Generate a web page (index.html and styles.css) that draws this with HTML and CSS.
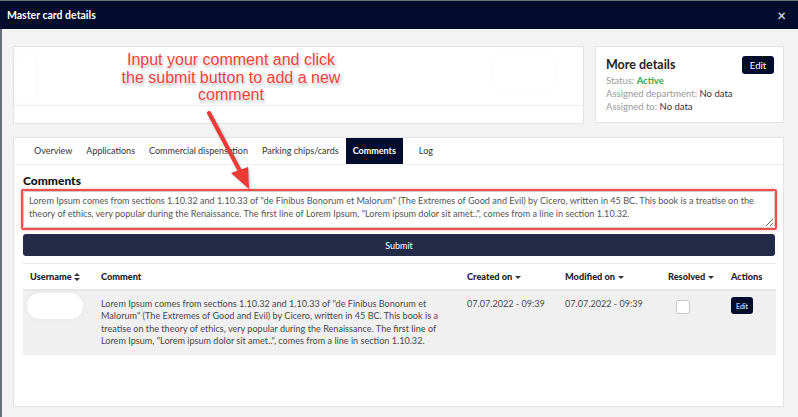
FILE: index.html
```html
<!DOCTYPE html>
<html lang="en">
<head>
    <meta charset="UTF-8">
    <title>Master card details</title>
    <link rel="stylesheet" href="styles.css">
</head>
<body>
    <div class="modal">
        <div class="modal-header">
            <span class="modal-title">Master card details</span>
            <span class="close">&times;</span>
        </div>
        <div class="modal-body">
            <div class="top-row">
                <div class="card info-card">
                    <div class="info-main">
                        <div class="blur blur-a"></div>
                        <div class="blur blur-b"></div>
                    </div>
                    <div class="info-foot"></div>
                </div>
                <div class="card details-card">
                    <div class="details-head">
                        <h3>More details</h3>
                        <button class="btn">Edit</button>
                    </div>
                    <div class="details-line"><span class="lbl">Status:</span> <span class="active">Active</span></div>
                    <div class="details-line"><span class="lbl">Assigned department:</span> No data</div>
                    <div class="details-line"><span class="lbl">Assigned to:</span> No data</div>
                </div>
            </div>

            <div class="card main-card">
                <div class="tabs">
                    <div class="tab">Overview</div>
                    <div class="tab">Applications</div>
                    <div class="tab">Commercial dispensation</div>
                    <div class="tab">Parking chips/cards</div>
                    <div class="tab selected">Comments</div>
                    <div class="tab tab-log">Log</div>
                </div>
                <div class="comments">
                    <h4>Comments</h4>
                    <div class="highlight">
                        <textarea class="comment-input">Lorem Ipsum comes from sections 1.10.32 and 1.10.33 of "de Finibus Bonorum et Malorum" (The Extremes of Good and Evil) by Cicero, written in 45 BC. This book is a treatise on the theory of ethics, very popular during the Renaissance. The first line of Lorem Ipsum, "Lorem ipsum dolor sit amet..", comes from a line in section 1.10.32.</textarea>
                    </div>
                    <button class="btn submit">Submit</button>

                    <table class="comment-table">
                        <colgroup>
                            <col class="c-user">
                            <col class="c-comment">
                            <col class="c-created">
                            <col class="c-modified">
                            <col class="c-resolved">
                            <col class="c-actions">
                        </colgroup>
                        <thead>
                            <tr>
                                <th>Username <svg class="sort" width="6" height="8" viewBox="0 0 6 8"><path d="M3 0L6 3H0zM3 8L0 5h6z" fill="#333"/></svg></th>
                                <th>Comment</th>
                                <th>Created on <span class="caret"></span></th>
                                <th>Modified on <span class="caret"></span></th>
                                <th>Resolved <span class="caret"></span></th>
                                <th>Actions</th>
                            </tr>
                        </thead>
                        <tbody>
                            <tr>
                                <td><div class="blur user-blur"></div></td>
                                <td class="comment-text">Lorem Ipsum comes from sections 1.10.32 and 1.10.33 of "de Finibus Bonorum et Malorum" (The Extremes of Good and Evil) by Cicero, written in 45 BC. This book is a treatise on the theory of ethics, very popular during the Renaissance. The first line of Lorem Ipsum, "Lorem ipsum dolor sit amet..", comes from a line in section 1.10.32.</td>
                                <td>07.07.2022 - 09:39</td>
                                <td>07.07.2022 - 09:39</td>
                                <td><span class="check"></span></td>
                                <td><button class="btn btn-sm">Edit</button></td>
                            </tr>
                        </tbody>
                    </table>
                </div>
            </div>
        </div>

        <!-- annotation over the screenshot -->
        <div class="note">Input your comment and click<br>the submit button to add a new<br>comment</div>
        <svg class="arrow" width="70" height="90" viewBox="0 0 70 90">
            <line x1="6" y1="4" x2="38" y2="64" stroke="#ee3a36" stroke-width="4" stroke-linecap="round"/>
            <path d="M28 64L45 58L46 80z" fill="#ee3a36"/>
        </svg>
    </div>
</body>
</html>
```

FILE: styles.css
```css
body {
    margin: 0;
    background-color: #6b6f78;
    font-family: Lato, "Open Sans", sans-serif;
    font-size: 9px;
    color: #333;
}
.modal {
    position: relative;
    margin-top: 1px;
    height: 416px;
    display: flex;
    flex-direction: column;
}
.modal-header {
    height: 28px;
    background-color: #020c2d;
    display: flex;
    align-items: center;
    justify-content: space-between;
    padding: 0 12px 0 7px;
    color: white;
}
.modal-title {
    font-weight: bold;
    font-size: 10.5px;
}
.close {
    font-size: 15px;
    font-weight: bold;
    color: #c8cad2;
}
.modal-body {
    flex: 1;
    background-color: #f3f3f3;
    margin-left: 2px;
    padding: 17px 14px 0 11px;
}
.card {
    background-color: white;
    border: 1px solid #e3e3e3;
    box-sizing: border-box;
}
.top-row {
    display: flex;
    gap: 11px;
}
.info-card {
    flex: 1;
    height: 78px;
    display: flex;
    flex-direction: column;
}
.info-main {
    flex: 1;
    position: relative;
    border-bottom: 1px solid #ececec;
}
.info-foot {
    height: 17px;
}
.blur {
    background-color: white;
    border-radius: 14px;
    box-shadow: 0 0 6px rgba(0, 0, 0, 0.04);
}
.details-card {
    width: 189px;
    height: 77px;
    padding: 9px 9px 0 10px;
}
.details-head {
    display: flex;
    justify-content: space-between;
    align-items: flex-start;
}
.details-head h3 {
    margin: 1px 0 0 0;
    font-size: 12.5px;
    font-weight: bold;
    color: #222;
}
.btn {
    background-color: #020c2d;
    color: white;
    border: none;
    border-radius: 3px;
    font-family: inherit;
    font-size: 9.5px;
    padding: 0;
    width: 32px;
    height: 18px;
    cursor: pointer;
}
.details-line {
    font-size: 9.5px;
    line-height: 13px;
    color: #333;
}
.lbl {
    color: #9a9a9a;
}
.active {
    color: #31a84a;
    font-weight: bold;
}
.main-card {
    margin-top: 13px;
    height: 270px;
}
.tabs {
    display: flex;
    height: 26px;
    padding-left: 13px;
    border-bottom: 1px solid #efefef;
}
.tab {
    padding: 0 7px;
    line-height: 26px;
    font-size: 9px;
    color: #333;
}
.tab.selected {
    background-color: #020c2d;
    color: white;
    font-weight: bold;
    padding: 0 7px;
}
.tab-log {
    padding-left: 16px;
}
.comments {
    padding: 0 8px 0 9px;
}
.comments h4 {
    margin: 8px 0 1px 0;
    font-size: 12px;
    font-weight: 900;
    color: #111;
}
.highlight {
    border: 2px solid #f0504b;
    border-radius: 2px;
    margin: 0 -2px;
    box-shadow: 0 0 3px rgba(200, 60, 60, 0.4);
}
.comment-input {
    display: block;
    width: 100%;
    height: 37px;
    box-sizing: border-box;
    resize: vertical;
    border: 1px solid #cfcfcf;
    border-radius: 2px;
    padding: 3px 5px;
    font-family: inherit;
    font-size: 9.1px;
    line-height: 12.5px;
    color: #555;
    overflow: hidden;
}
.submit {
    display: block;
    width: 100%;
    height: 22px;
    margin-top: 4px;
    background-color: #232b46;
    border-radius: 3px;
    font-size: 9px;
}
.comment-table {
    width: 100%;
    margin-top: 7px;
    border-collapse: collapse;
    table-layout: fixed;
    border-top: 1px solid #e6e6e6;
}
.c-user { width: 71px; }
.c-comment { width: 366px; }
.c-created { width: 98px; }
.c-modified { width: 103px; }
.c-resolved { width: 63px; }
.c-actions { width: 52px; }
.comment-table th {
    text-align: left;
    font-size: 9.2px;
    font-weight: 900;
    color: #222;
    height: 25px;
    padding: 0 0 0 7px;
    border-bottom: 2px solid #e4e6ea;
    white-space: nowrap;
}
.sort {
    vertical-align: -1px;
}
.caret {
    display: inline-block;
    width: 0;
    height: 0;
    border-left: 3px solid transparent;
    border-right: 3px solid transparent;
    border-top: 3.5px solid #333;
    vertical-align: 1px;
    margin-left: 1px;
}
.comment-table tbody tr {
    background-color: #f0f0f0;
}
.comment-table td {
    vertical-align: top;
    padding: 7px 0 7px 7px;
    font-size: 9.1px;
    line-height: 12.4px;
    color: #4a4a4a;
}
.comment-text {
    padding-right: 17px !important;
}
.user-blur {
    width: 56px;
    height: 26px;
    margin: -5px 0 0 -3px;
}
.check {
    display: inline-block;
    width: 12px;
    height: 12px;
    background-color: white;
    border: 1px solid #c9c9c9;
    border-radius: 2px;
    margin: 2px 0 0 8px;
}
.btn-sm {
    width: 22px;
    height: 17px;
    font-size: 7px;
    margin: -1px 0 0 0;
}
.blur-a {
    position: absolute;
    left: 2px;
    top: 6px;
    width: 20px;
    height: 50px;
}
.blur-b {
    position: absolute;
    left: 480px;
    top: 5px;
    width: 60px;
    height: 40px;
}
.note {
    position: absolute;
    left: 98px;
    top: 50px;
    width: 266px;
    text-align: center;
    font-family: "Liberation Sans", Arial, sans-serif;
    font-size: 16px;
    line-height: 17.5px;
    color: #f2403a;
    text-shadow: 0 0 2px white, 0 0 2px white, 1px 2px 3px rgba(0, 0, 0, 0.35);
}
.arrow {
    position: absolute;
    left: 203px;
    top: 108px;
    filter: drop-shadow(1px 1px 1px rgba(0, 0, 0, 0.3));
}
```
